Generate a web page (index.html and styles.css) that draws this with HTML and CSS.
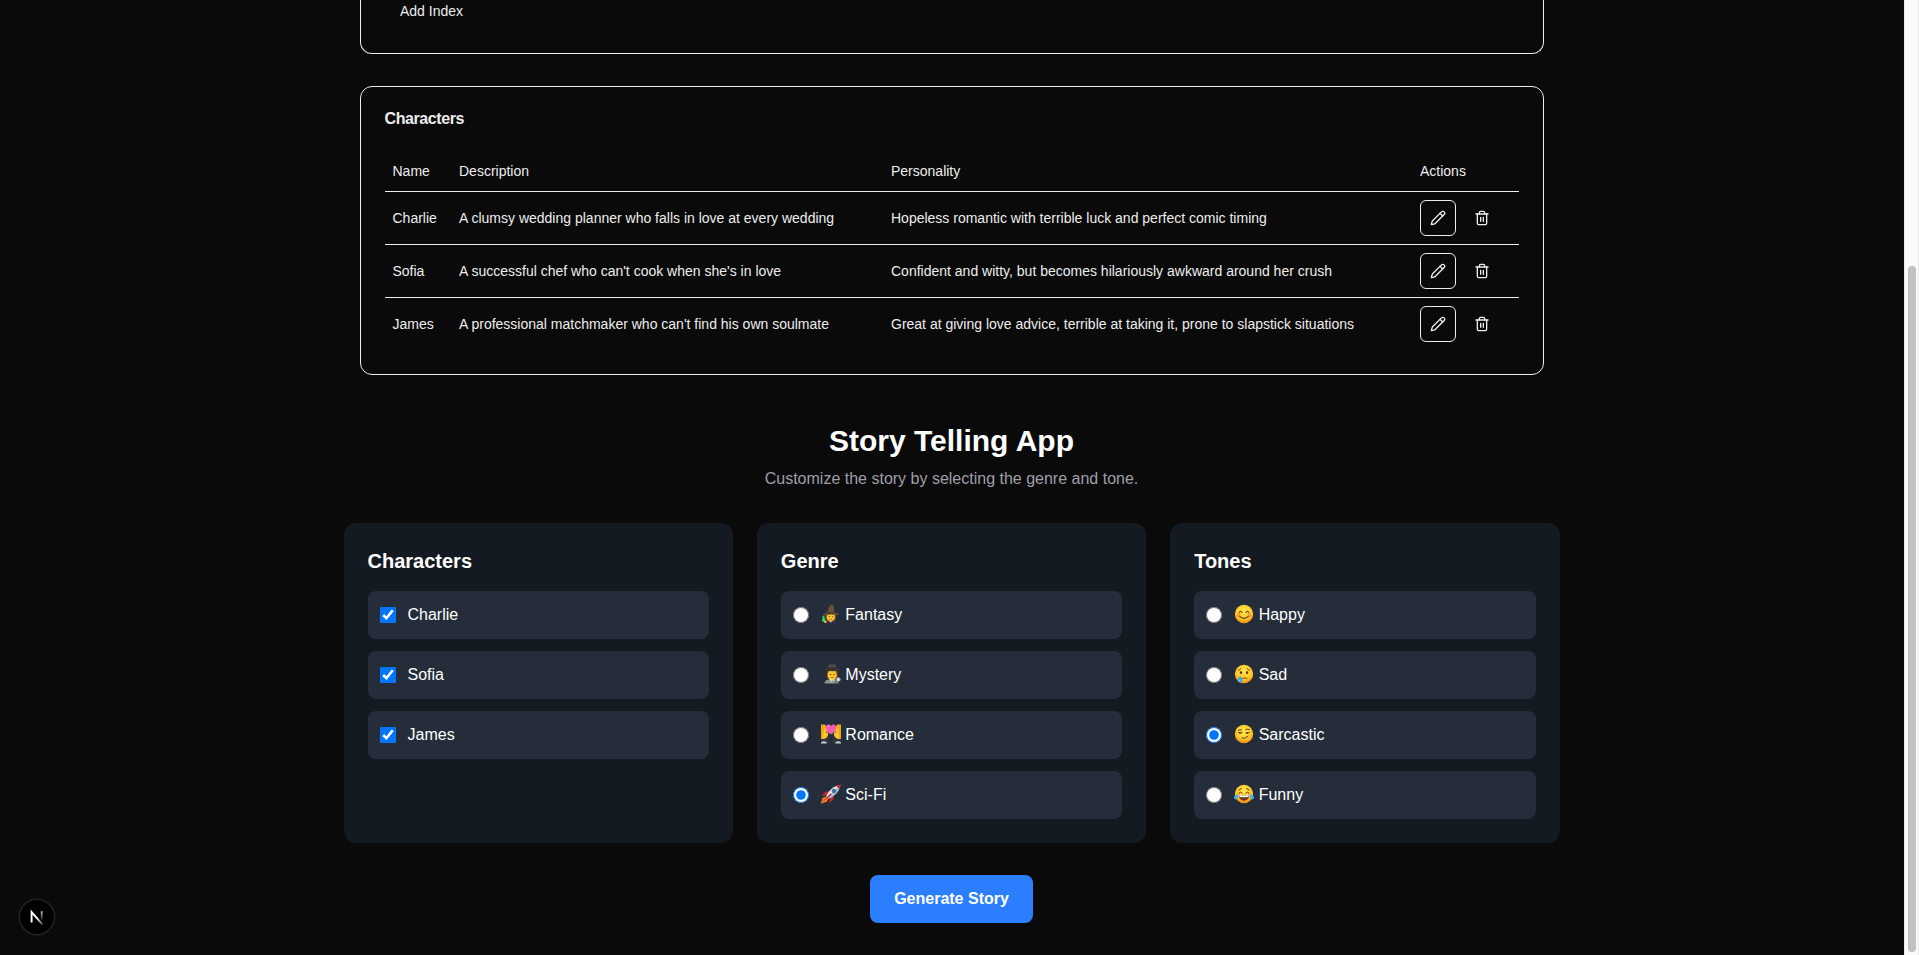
FILE: index.html
```html
<!DOCTYPE html>
<html lang="en">
<head>
<meta charset="utf-8">
<title>Story Telling App</title>
<link rel="stylesheet" href="styles.css">
</head>
<body>
<svg class="defs" width="0" height="0">
  <defs>
    <radialGradient id="face" cx=".5" cy=".35" r=".65"><stop offset="0" stop-color="#ffe64d"/><stop offset=".65" stop-color="#ffc928"/><stop offset="1" stop-color="#f08a12"/></radialGradient>
    <symbol id="pencil" viewBox="0 0 24 24"><path d="M21.174 6.812a1 1 0 0 0-3.986-3.987L3.842 16.174a2 2 0 0 0-.5.83l-1.321 4.352a.5.5 0 0 0 .623.622l4.353-1.32a2 2 0 0 0 .83-.497z"/><path d="m15 5 4 4"/></symbol>
    <symbol id="trash" viewBox="0 0 24 24"><path d="M3 6h18"/><path d="M19 6v14c0 1-1 2-2 2H7c-1 0-2-1-2-2V6"/><path d="M8 6V4c0-1 1-2 2-2h4c1 0 2 1 2 2v2"/><path d="M10 11v6M14 11v6"/></symbol>
  </defs>
</svg>
<div class="viewport">
  <main class="page">
    <section class="card card-index"><button class="ghost">Add Index</button></section>
    <section class="card card-characters">
      <h3 class="card-title">Characters</h3>
      <table class="table">
        <colgroup><col class="col-name"><col class="col-desc"><col class="col-pers"><col></colgroup>
        <thead><tr><th>Name</th><th>Description</th><th>Personality</th><th>Actions</th></tr></thead>
        <tbody>
          <tr><td>Charlie</td><td>A clumsy wedding planner who falls in love at every wedding</td><td>Hopeless romantic with terrible luck and perfect comic timing</td><td><div class="actions"><button class="icon-btn outlined"><svg class="icon"><use href="#pencil"/></svg></button><button class="icon-btn"><svg class="icon"><use href="#trash"/></svg></button></div></td></tr>
          <tr><td>Sofia</td><td>A successful chef who can't cook when she's in love</td><td>Confident and witty, but becomes hilariously awkward around her crush</td><td><div class="actions"><button class="icon-btn outlined"><svg class="icon"><use href="#pencil"/></svg></button><button class="icon-btn"><svg class="icon"><use href="#trash"/></svg></button></div></td></tr>
          <tr><td>James</td><td>A professional matchmaker who can't find his own soulmate</td><td>Great at giving love advice, terrible at taking it, prone to slapstick situations</td><td><div class="actions"><button class="icon-btn outlined"><svg class="icon"><use href="#pencil"/></svg></button><button class="icon-btn"><svg class="icon"><use href="#trash"/></svg></button></div></td></tr>
        </tbody>
      </table>
    </section>

    <header class="intro">
      <h1>Story Telling App</h1>
      <p>Customize the story by selecting the genre and tone.</p>
    </header>

    <div class="panels">
      <section class="panel">
        <h2>Characters</h2>
        <div class="options">
          <label class="option"><input type="checkbox" checked><span>Charlie</span></label>
          <label class="option"><input type="checkbox" checked><span>Sofia</span></label>
          <label class="option"><input type="checkbox" checked><span>James</span></label>
        </div>
      </section>
      <section class="panel">
        <h2>Genre</h2>
        <div class="options">
          <label class="option"><input type="radio" name="genre"><span class="choice"><svg class="emoji" viewBox="0 0 20 20">
            <path d="M3.500 19.300c.5-2.500 2.500-3.300 6-3.300s6 .8 6.500 3.300z" fill="#39324a"/><path d="M7.500 16h4.500l-2.200 3.300z" fill="#9a6fb8"/>
            <path d="M5 9.500h9.500l.7 5.500-1.500 2H6L4.300 15z" fill="#6b4a26"/><ellipse cx="9.800" cy="12.900" rx="4.100" ry="4.500" fill="#fdc72f"/>
            <circle cx="8.300" cy="12.500" r=".6" fill="#513015"/><circle cx="11.400" cy="12.500" r=".6" fill="#513015"/><path d="M8.400 15q1.400.9 2.800 0" stroke="#a33f1b" stroke-width=".7" fill="none"/>
            <path d="M1.700 10.700c1.600-1.200 3.700-1.500 4.300-2.300L8 2.700 10.200.3l2.800.9-.7 1.200 1.700 6c1.300.8 3 1 4.300 2.200-3 1.200-5 .2-8.300-.1-3 .3-5.300 1.300-8.300.2z" fill="#665039"/><path d="M6.200 8.400q3.700 1.400 7.600-.1" stroke="#3c3023" stroke-width="1" fill="none"/>
            <path d="M1.500 11.800h2v2l.9 3.300q-2 1.300-3.600 0l.7-3.300z" fill="#2fd46b"/><circle cx="4.300" cy="17.700" r="1.200" fill="#fdc72f"/></svg><span>Fantasy</span></span></label>
          <label class="option"><input type="radio" name="genre"><span class="choice"><svg class="emoji" viewBox="0 0 20 20">
            <path d="M3.500 19.500c0-3 3-4.500 7.500-4.500s6.500 1.500 6.500 4.500z" fill="#92918c"/><path d="M8.500 15l2.600 4.500 2.600-4.500z" fill="#f2f2f2"/><path d="M10.500 16.500l.6 3 .7-3z" fill="#333"/><path d="M6 7h10.500l.3 6-1.300 2H7l-1.300-2z" fill="#7a4f28"/>
            <ellipse cx="11.200" cy="11" rx="4.500" ry="5" fill="#fdc72f"/><circle cx="9.500" cy="10.400" r=".7" fill="#513015"/><circle cx="13" cy="10.400" r=".7" fill="#513015"/><path d="M9.800 13.500h2.800" stroke="#a35a1b" stroke-width=".8"/>
            <path d="M6.700 5C6.900 1.500 7.900.1 9.400.3l1.800.5 1.800-.5c1.500-.2 2.400 1.200 2.600 4.700z" fill="#504d4b"/><ellipse cx="11.200" cy="5.700" rx="7.700" ry="1.600" fill="#3c3937"/><path d="M6.900 4.200h8.600" stroke="#242120"/>
            <circle cx="17.300" cy="15.500" r="2.100" fill="#c5e0ee" stroke="#777" stroke-width=".8"/><path d="M15.600 17.200L14.200 19" stroke="#666" stroke-width="1.200"/></svg><span>Mystery</span></span></label>
          <label class="option"><input type="radio" name="genre"><span class="choice"><svg class="emoji" viewBox="0 0 20 20">
            <path d="M0 1.500h3.500c3 1 3.700 4 3.200 6.500l.5 2.500-1.200 3L3.500 15H0z" fill="#ffc52c"/><path d="M0 .5h4l1.500 2.500L3 5l-.7 5L1.500 15H0z" fill="#f0a51e"/><path d="M20 1.500h-3.500c-3 1-3.700 4-3.200 6.500l-.5 2.500 1.200 3 2.500 1.500H20z" fill="#ffc52c"/><path d="M20 .5h-4l-1.500 2.500L17 5l.7 5 .8 5H20z" fill="#f0a51e"/>
            <path d="M4.800 8.200h1.300M13.900 8.200h1.300" stroke="#5a3612" stroke-width="1"/><path d="M0 15.500l5-1 2.500-3L8.700 19.500H0z" fill="#34363f"/><path d="M20 15.500l-5-1-2.500-3L11.300 19.500H20z" fill="#34363f"/><path d="M0 18.500q2-2 5.500-.5v1.500H0zM20 18.500q-2-2-5.500-.5v1.500H20z" fill="#c3c7d0"/>
            <path d="M10 10.500C6 8 4.800 5.500 5 3c.4-3 4-3.300 5-.7C11-.3 14.600 0 15 3c.2 2.500-1 5-5 7.500z" fill="#f35bb6"/><path d="M6.600 3q.3-1.500 1.600-1.400" stroke="#ff9ed6" stroke-width="1" fill="none"/></svg><span>Romance</span></span></label>
          <label class="option"><input type="radio" name="genre" checked><span class="choice"><svg class="emoji" viewBox="0 0 20 20">
            <path d="M6.200 12.200L1.500 14 0 19.500l5.500-1.700 2.400-4z" fill="#ffb51e"/><path d="M5.500 12.800L2 14.800.5 18.800l4-1.500 2.500-3z" fill="#f0542a"/>
            <path d="M8.500 7.200L4.600 7.500.5 12l6-.9zM12.800 11.500l-.3 3.900-4.200 3.600.7-5.500z" fill="#c9262f"/>
            <path d="M5.300 12.300C8 6.500 12 2.200 19.500.7c-1 7.300-6 11.300-11.800 14z" fill="#a8c4d8"/><path d="M5.300 12.300C8 6.500 12 2.200 19.500.7L6.500 13.500z" fill="#dce8f1"/><path d="M15.200 1.900C16.500 1.300 18 .9 19.500.7c-.2 1.500-.6 2.900-1.200 4.200z" fill="#c9262f"/>
            <circle cx="13" cy="7" r="1.900" fill="#2774ae" stroke="#606c76" stroke-width=".8"/><path d="M10.300 9.700L6 14" stroke="#b7212b" stroke-width="1.400"/></svg><span>Sci-Fi</span></span></label>
        </div>
      </section>
      <section class="panel">
        <h2>Tones</h2>
        <div class="options">
          <label class="option"><input type="radio" name="tone"><span class="choice"><svg class="emoji" viewBox="0 0 20 20">
            <circle cx="10" cy="10" r="9.200" fill="url(#face)"/><circle cx="4.500" cy="11.300" r="2" fill="#f8803c" opacity=".55"/><circle cx="15.500" cy="11.300" r="2" fill="#f8803c" opacity=".55"/>
            <path d="M5.300 8.600q1.400-2.800 2.800 0M11.900 8.600q1.400-2.800 2.800 0M5.500 12.200q4.500 4.300 9 0" fill="none" stroke="#6b3a0c" stroke-width="1.100" stroke-linecap="round"/></svg><span>Happy</span></span></label>
          <label class="option"><input type="radio" name="tone"><span class="choice"><svg class="emoji" viewBox="0 0 20 20">
            <circle cx="10" cy="10" r="9.200" fill="url(#face)"/><ellipse cx="7" cy="8.600" rx="1.100" ry="1.500" fill="#5e350d"/><ellipse cx="13" cy="8.600" rx="1.100" ry="1.500" fill="#5e350d"/>
            <path d="M4.300 6.200q1.500-.3 2.700-1.600M15.700 6.200q-1.500-.3-2.700-1.600M8.300 14.600q2.300-2 4.600 0" fill="none" stroke="#6b3a0c" stroke-width=".9" stroke-linecap="round"/><path d="M6 11.600c-1.400 2-2.300 3.300-2.300 4.600a2.300 2.300 0 0 0 4.600 0c0-1.300-.9-2.600-2.300-4.600z" fill="#3faaf0"/><path d="M5 16.100q0 1.100.9 1.400" stroke="#a9e0ff" stroke-width=".8" fill="none"/></svg><span>Sad</span></span></label>
          <label class="option"><input type="radio" name="tone" checked><span class="choice"><svg class="emoji" viewBox="0 0 20 20">
            <circle cx="10" cy="10" r="9.200" fill="url(#face)"/><path d="M4.300 6.400q1.700-1.400 3.400-.4M11.800 5.500q1.900-1.100 3.700.2M4.500 8.700h3.600M11.800 8.700h3.600M8 14.200q4 .6 6-2" fill="none" stroke="#6b3a0c" stroke-width="1" stroke-linecap="round"/><path d="M5 8.800h2q-.3 1.200-1 1.200T5 8.800zM12.200 8.800h2q-.3 1.200-1 1.200t-1-1.200z" fill="#5e350d"/></svg><span>Sarcastic</span></span></label>
          <label class="option"><input type="radio" name="tone"><span class="choice"><svg class="emoji" viewBox="0 0 20 20">
            <circle cx="10" cy="10" r="9.200" fill="url(#face)"/><path d="M4.800 6q1.200-1.500 2.700-1.300M15.200 6q-1.200-1.500-2.700-1.300M4.700 9.200q1.600-2.300 3.500-.2M11.800 9q1.900-2.100 3.500.2" fill="none" stroke="#6b3a0c" stroke-width="1" stroke-linecap="round"/>
            <path d="M4.700 10.800q5.300 1 10.600 0c-.2 3.700-2.300 5.900-5.300 5.900s-5.100-2.200-5.300-5.900z" fill="#6a3513"/><path d="M5.200 11q4.800.8 9.600 0l-.4 1.900q-4.400.7-8.800 0z" fill="#fff"/>
            <path d="M4.300 10.200C1.500 10.500-.1 12.200.1 14c.2 1.700 2.400 1.900 3.300.4.700-1.100.7-2.600.9-4.200zM15.700 10.200c2.800.3 4.400 2 4.200 3.800-.2 1.700-2.400 1.900-3.300.4-.7-1.100-.7-2.600-.9-4.200z" fill="#49b3f2"/></svg><span>Funny</span></span></label>
        </div>
      </section>
    </div>
    <button class="primary">Generate Story</button>
  </main>
  <div class="scrollbar"><div class="thumb"></div></div>
</div>
<div class="dev-badge"><svg width="36" height="36" viewBox="0 0 36 36" fill="none"><path d="M12.600 23.500V13L23.400 25.300" stroke="url(#nstroke)" stroke-width="1.900"/><path d="M22.700 12.200v8.600" stroke="url(#nbar)" stroke-width="1.800"/><defs><linearGradient id="nstroke" gradientUnits="userSpaceOnUse" x1="18" y1="19" x2="24" y2="26"><stop offset="0" stop-color="#fff"/><stop offset="1" stop-color="#fff" stop-opacity=".2"/></linearGradient><linearGradient id="nbar" gradientUnits="userSpaceOnUse" x1="22" y1="12" x2="22" y2="21"><stop offset="0" stop-color="#fff" stop-opacity=".8"/><stop offset="1" stop-color="#fff" stop-opacity=".1"/></linearGradient></defs></svg></div>
</body>
</html>
```
FILE: styles.css
```css
* { box-sizing: border-box; margin: 0; padding: 0; }
body { background: #0a0a0a; color: #ededed; font: 16px/24px "Liberation Sans", Arial, sans-serif; overflow: hidden; }
button { font: inherit; color: inherit; background: none; border: 0; }
.defs { position: absolute; }
.viewport { display: flex; height: 955px; }
.page { flex: 1; display: flex; flex-direction: column; align-items: center; padding-right: 1px; }

.card { width: 1184px; flex: none; border: 1px solid #ededed; border-radius: 12px; }
.card-index { height: 54px; border-top: 0; border-radius: 0 0 12px 12px; padding: 1px 39.500px; font-size: 14px; }
.ghost { display: block; line-height: 20px; }
.card-characters { height: 289px; margin-top: 32px; padding: 24px; }
.card-title { font-size: 16px; line-height: 16px; margin-bottom: 24px; letter-spacing: -0.4px; }
.table { width: 1134px; table-layout: fixed; border-collapse: separate; border-spacing: 0; font-size: 14px; line-height: 20px; white-space: nowrap; }
.col-name { width: 66.500px; }
.col-desc { width: 432px; }
.col-pers { width: 529px; }
.table th { height: 41px; padding: 0 8px; font-weight: 400; text-align: left; border-bottom: 1px solid #ededed; }
.table td { height: 53px; padding: 8px; border-bottom: 1px solid #ededed; }
.table tr:last-child td { height: 52px; border-bottom: 0; }
.actions { display: flex; gap: 8px; }
.icon-btn { width: 36px; height: 36px; display: flex; align-items: center; justify-content: center; border-radius: 6px; }
.outlined { border: 1px solid #ededed; }
.icon { width: 16px; height: 16px; fill: none; stroke: currentColor; stroke-width: 2; stroke-linecap: round; stroke-linejoin: round; }

.intro { margin-top: 48px; text-align: center; }
.intro h1 { font-size: 30px; line-height: 36px; color: #fff; }
.intro p { margin-top: 8px; color: #9f9fa9; }
.panels { width: 1216px; margin-top: 32px; display: grid; grid-template-columns: repeat(3, 1fr); gap: 24px; }
.panel { height: 320px; padding: 24px; border-radius: 12px; background: #141a21; }
.panel h2 { font-size: 20px; line-height: 28px; color: #fff; margin-bottom: 16px; }
.options { display: flex; flex-direction: column; gap: 12px; }
.option { display: flex; align-items: center; gap: 12px; height: 48px; padding: 0 12px; border-radius: 8px; background: #242d39; color: #fff; }
.option input { width: 16px; height: 16px; flex: none; }
.choice { display: flex; align-items: center; gap: 4.500px; }
.emoji { width: 20px; height: 20px; margin-bottom: 2px; overflow: visible; }
.primary { margin-top: 32px; width: 163px; height: 48px; border-radius: 8px; background: #2b7fff; color: #fff; font-weight: 700; }

.scrollbar { width: 15px; padding: 266px 3px 0; background: #fafafa; border: solid #e8e8e8; border-width: 0 1px; }
.thumb { width: 8px; height: 686px; border-radius: 4px; background: #c1c1c1; }
.dev-badge { position: absolute; left: 19px; top: 899px; width: 36px; height: 36px; border-radius: 50%; background: #000; box-shadow: inset 0 0 0 1px #2a2a2a, 0 0 0 1px #151515; }
```
